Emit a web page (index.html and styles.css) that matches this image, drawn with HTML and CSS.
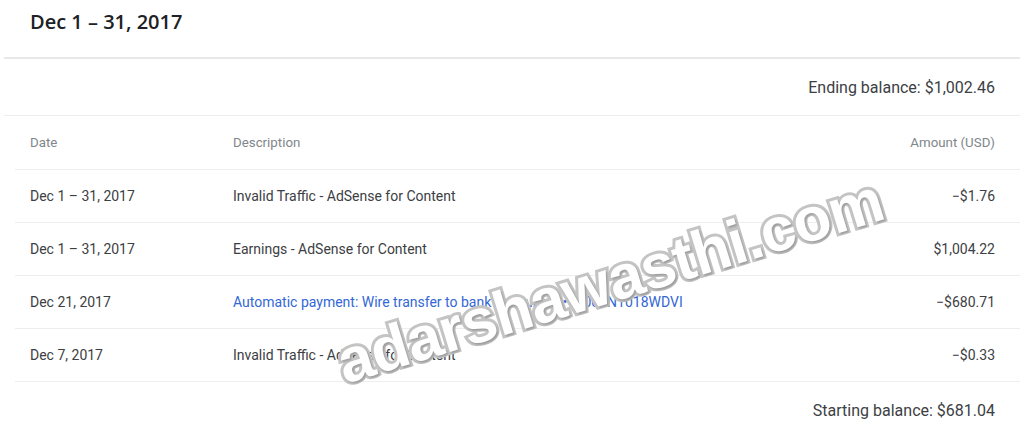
FILE: index.html
```html
<!DOCTYPE html>
<html lang="en">
<head>
    <meta charset="UTF-8" />
    <title>Transactions - Dec 1 – 31, 2017</title>
    <link rel="stylesheet" href="styles.css">
</head>
<body>
    <div class="page">
        <h1 class="period">Dec 1 – 31, 2017</h1>

        <div class="balance">Ending balance: $1,002.46</div>

        <div class="activity">
            <div class="row head">
                <span class="date">Date</span>
                <span class="desc">Description</span>
                <span class="amount">Amount (USD)</span>
            </div>
            <div class="row">
                <span class="date">Dec 1 – 31, 2017</span>
                <span class="desc">Invalid Traffic - AdSense for Content</span>
                <span class="amount">−$1.76</span>
            </div>
            <div class="row">
                <span class="date">Dec 1 – 31, 2017</span>
                <span class="desc">Earnings - AdSense for Content</span>
                <span class="amount">$1,004.22</span>
            </div>
            <div class="row">
                <span class="date">Dec 21, 2017</span>
                <a class="desc link" href="#">Automatic payment: Wire transfer to bank account ••••• 0001N1018WDVI</a>
                <span class="amount">−$680.71</span>
            </div>
            <div class="row">
                <span class="date">Dec 7, 2017</span>
                <span class="desc">Invalid Traffic - AdSense for Content</span>
                <span class="amount">−$0.33</span>
            </div>
        </div>

        <div class="balance last">Starting balance: $681.04</div>

        <div class="watermark">adarshawasthi.com</div>
    </div>
</body>
</html>
```

FILE: styles.css
```css
body {
    margin: 0;
    background: #fff;
    font-family: Roboto, "Liberation Sans", sans-serif;
    color: #3c4043;
}
.page {
    position: relative;
    margin: 0 4px;
    overflow: hidden;
    height: 444px;
}
.period {
    margin: 0;
    height: 49px;
    padding: 8px 0 0 26px;
    line-height: 28px;
    font-family: "Open Sans", Roboto, sans-serif;
    font-size: 20px;
    font-weight: 600;
    color: #202124;
    border-bottom: 2px solid #e8e8e8;
}
.balance {
    height: 56px;
    display: flex;
    align-items: center;
    justify-content: flex-end;
    padding-right: 25px;
    font-size: 16px;
    color: #3c4043;
    border-bottom: 1px solid #eeeeee;
}
.balance.last {
    border-bottom: none;
}
.activity {
    margin-left: 11px;
}
.row {
    height: 52px;
    display: flex;
    align-items: center;
    padding: 0 25px 0 15px;
    font-size: 14px;
    border-bottom: 1px solid #eeeeee;
}
.row.head {
    height: 53px;
    font-size: 13.3px;
    color: #80868b;
}
.date {
    width: 203px;
}
.desc {
    flex: 1;
}
.link {
    color: #3367d6;
    text-decoration: none;
}
.amount {
    text-align: right;
}
.watermark {
    position: absolute;
    left: 341px;
    top: 332px;
    line-height: 1;
    font-family: "Liberation Sans", sans-serif;
    font-weight: bold;
    font-size: 62px;
    letter-spacing: -0.5px;
    color: #fff;
    -webkit-text-stroke: 6px #c4c4c4;
    paint-order: stroke fill;
    text-shadow: 1px 2px 2px rgba(0, 0, 0, 0.2);
    transform: rotate(-17deg);
    transform-origin: 0 52px;
    white-space: nowrap;
}
```
